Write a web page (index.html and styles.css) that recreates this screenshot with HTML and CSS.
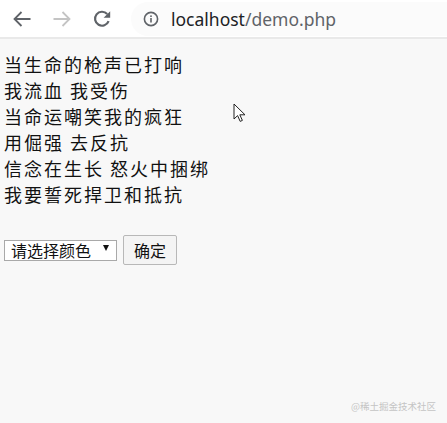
FILE: index.html
```html
<!DOCTYPE html>
<html lang="zh-CN">
<head>
    <meta charset="UTF-8">
    <title>demo</title>
    <link rel="stylesheet" href="styles.css">
</head>
<body>
    <div class="toolbar">
        <span class="nav-btn">
            <svg width="20" height="20" viewBox="0 0 20 20"><path d="M18.5 10H2.5M9.5 3l-7 7 7 7" fill="none" stroke="#5f6368" stroke-width="1.8"/></svg>
        </span>
        <span class="nav-btn">
            <svg width="20" height="20" viewBox="0 0 20 20"><path d="M1.5 10h16M10.5 3l7 7-7 7" fill="none" stroke="#c4c4c4" stroke-width="1.8"/></svg>
        </span>
        <span class="nav-btn">
            <svg width="20" height="20" viewBox="0 0 20 20"><path d="M16.6 12.2A7 7 0 1 1 15.2 5" fill="none" stroke="#5f6368" stroke-width="2.2"/><path d="M18.2 2.2v6.6h-6.6z" fill="#5f6368"/></svg>
        </span>
        <div class="address">
            <svg class="info" width="16" height="16" viewBox="0 0 16 16"><circle cx="8" cy="8" r="6.6" fill="none" stroke="#5f6368" stroke-width="1.6"/><rect x="7.2" y="7" width="1.6" height="4.5" fill="#5f6368"/><rect x="7.2" y="4.4" width="1.6" height="1.6" fill="#5f6368"/></svg>
            <span class="host">localhost</span><span class="path">/demo.php</span>
        </div>
    </div>

    <div class="page">
        <div class="lyrics">
            <p>当生命的枪声已打响</p>
            <p>我流血 我受伤</p>
            <p>当命运嘲笑我的疯狂</p>
            <p>用倔强 去反抗</p>
            <p>信念在生长 怒火中捆绑</p>
            <p>我要誓死捍卫和抵抗</p>
        </div>

        <form class="color-form">
            <div class="select-wrap">
                <select class="color-select">
                    <option>请选择颜色</option>
                    <option>红色</option>
                    <option>绿色</option>
                    <option>蓝色</option>
                </select>
            </div>
            <button type="button" class="ok-btn">确定</button>
        </form>

        <svg class="cursor" width="14" height="20" viewBox="0 0 14 20"><path d="M1 1v15l3.6-3.4 2.6 5.8 2.2-1-2.6-5.6H12z" fill="#fff" stroke="#222" stroke-width="1"/></svg>

        <div class="watermark">@稀土掘金技术社区</div>
    </div>
</body>
</html>
```

FILE: styles.css
```css
* {
    margin: 0;
    padding: 0;
    box-sizing: border-box;
}

body {
    font-family: "Noto Sans CJK SC", "Liberation Sans", sans-serif;
    background: #f8f8f8;
    width: 447px;
    height: 423px;
    overflow: hidden;
}

.toolbar {
    height: 39px;
    background: #fff;
    border-bottom: 2px solid #e9e9e9;
    display: flex;
    align-items: center;
    padding-left: 7px;
}

.nav-btn {
    width: 30px;
    height: 30px;
    margin-right: 10px;
    display: flex;
    align-items: center;
    justify-content: center;
}

.address {
    flex: 1;
    height: 34px;
    margin-left: 4px;
    background: #fbfbfb;
    border-radius: 17px 0 0 17px;
    display: flex;
    align-items: center;
    padding-left: 12px;
    font-family: "Noto Sans", "Liberation Sans", sans-serif;
    font-size: 17.5px;
}

.info {
    margin-right: 12px;
}

.host {
    color: #202124;
}

.path {
    color: #5f6368;
}

.page {
    position: relative;
    height: 384px;
    padding: 12px 4px 0;
}

.lyrics {
    font-size: 18px;
    letter-spacing: 2px;
    line-height: 26px;
    color: #111;
}

.color-form {
    margin-top: 28px;
    display: flex;
    align-items: center;
    gap: 6px;
}

.select-wrap {
    position: relative;
}

.select-wrap::after {
    content: '';
    position: absolute;
    right: 8px;
    top: 7px;
    border-left: 3.5px solid transparent;
    border-right: 3.5px solid transparent;
    border-top: 6px solid #111;
    pointer-events: none;
}

.color-select {
    appearance: none;
    width: 113px;
    height: 21px;
    padding-left: 6px;
    font-family: "Noto Sans CJK SC", sans-serif;
    font-size: 16px;
    line-height: 19px;
    background: #fff;
    border: 1px solid #a9a9a9;
    border-radius: 0;
    color: #111;
}

.ok-btn {
    width: 54px;
    height: 30px;
    font-family: "Noto Sans CJK SC", sans-serif;
    font-size: 16px;
    color: #111;
    background: #f4f4f4;
    border: 1px solid #b8b8b8;
    border-radius: 2px;
}

.cursor {
    position: absolute;
    left: 233px;
    top: 64px;
}

.watermark {
    position: absolute;
    right: 11px;
    bottom: 10px;
    font-size: 9.5px;
    color: #c4c4c4;
}
```
